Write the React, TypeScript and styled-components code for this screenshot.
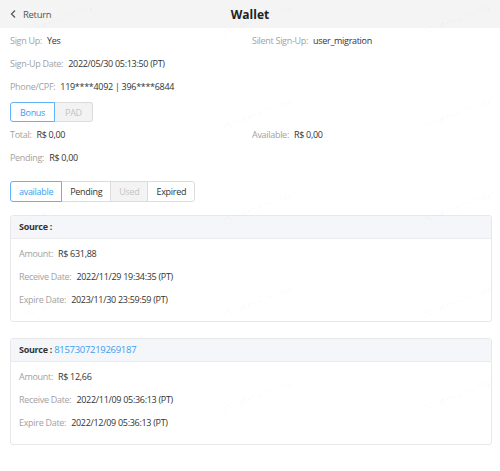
import { useState } from 'react';
import styled, { createGlobalStyle } from 'styled-components';

const GlobalStyle = createGlobalStyle`
  body {
    margin: 0;
    background: #fff;
    font-family: 'Open Sans', 'Noto Sans', sans-serif;
    font-size: 9px;
    letter-spacing: -0.3px;
    color: #333;
  }
  * { box-sizing: border-box; }
`;

interface Coupon {
  source?: string;
  amount: string;
  receiveDate: string;
  expireDate: string;
}

const coupons: Coupon[] = [
  {
    amount: 'R$ 631,88',
    receiveDate: '2022/11/29 19:34:35 (PT)',
    expireDate: '2023/11/30 23:59:59 (PT)',
  },
  {
    source: '8157307219269187',
    amount: 'R$ 12,66',
    receiveDate: '2022/11/09 05:36:13 (PT)',
    expireDate: '2022/12/09 05:36:13 (PT)',
  },
];

const tabs = [
  { name: 'available', disabled: false },
  { name: 'Pending', disabled: false },
  { name: 'Used', disabled: true },
  { name: 'Expired', disabled: false },
];

const WATERMARK = 'jhonatanm01611981';

function Field({ label, value }: { label: string; value: string }) {
  return (
    <Item>
      <Label>{label}:</Label>
      <Value>{value}</Value>
    </Item>
  );
}

export default function App() {
  const [kind, setKind] = useState('Bonus');
  const [tab, setTab] = useState('available');

  return (
    <Page>
      <GlobalStyle />
      <Header>
        <Back>
          <svg width="8" height="10" viewBox="0 0 8 10">
            <path d="M6 1.5 L2.5 5 L6 8.5" fill="none" stroke="#555" strokeWidth="1.2" />
          </svg>
          Return
        </Back>
        <Title>Wallet</Title>
      </Header>

      <Body>
        <Grid>
          <Field label="Sign Up" value="Yes" />
          <Field label="Silent Sign-Up" value="user_migration" />
        </Grid>
        <Field label="Sign-Up Date" value="2022/05/30 05:13:50 (PT)" />
        <Field label="Phone/CPF" value="119****4092 | 396****6844" />

        <Segment>
          {['Bonus', 'PAD'].map((k) => (
            <SegButton
              key={k}
              $active={kind === k}
              $disabled={k === 'PAD'}
              onClick={() => k !== 'PAD' && setKind(k)}
            >
              {k}
            </SegButton>
          ))}
        </Segment>

        <Grid>
          <Field label="Total" value="R$ 0,00" />
          <Field label="Available" value="R$ 0,00" />
        </Grid>
        <Field label="Pending" value="R$ 0,00" />

        <Tabs>
          {tabs.map((t) => (
            <TabButton
              key={t.name}
              $active={tab === t.name}
              $disabled={t.disabled}
              onClick={() => !t.disabled && setTab(t.name)}
            >
              {t.name}
            </TabButton>
          ))}
        </Tabs>

        {coupons.map((c, idx) => (
          <Card key={idx}>
            <CardHead>
              Source :{c.source && <SourceLink> {c.source}</SourceLink>}
            </CardHead>
            <CardBody>
              <Field label="Amount" value={c.amount} />
              <Field label="Receive Date" value={c.receiveDate} />
              <Field label="Expire Date" value={c.expireDate} />
            </CardBody>
          </Card>
        ))}
      </Body>

      <Watermark>
        {Array.from({ length: 15 }).map((_, i) => (
          <Mark key={i}>{WATERMARK}</Mark>
        ))}
      </Watermark>
    </Page>
  );
}

const Page = styled.div`
  position: relative;
  width: 500px;
  min-height: 471px;
  overflow: hidden;
`;

const Header = styled.div`
  position: relative;
  display: flex;
  align-items: center;
  justify-content: center;
  height: 28px;
  background-color: #f4f4f4;
`;

const Back = styled.div`
  position: absolute;
  left: 9px;
  top: 0;
  height: 28px;
  display: flex;
  align-items: center;
  gap: 6px;
  color: #555;
  font-size: 9.5px;
  cursor: pointer;
`;

const Title = styled.div`
  font-size: 12px;
  font-weight: 700;
  letter-spacing: 0;
  color: #222;
`;

const Body = styled.div`
  padding: 1px 8px 0 10px;
  display: flex;
  flex-direction: column;
  align-items: flex-start;
`;

const Grid = styled.div`
  display: grid;
  grid-template-columns: 242px 1fr;
  width: 100%;
`;

const Item = styled.div`
  height: 23px;
  line-height: 23px;
  white-space: nowrap;
`;

const Label = styled.span`
  color: #a2a2a2;
  margin-right: 5px;
`;

const Value = styled.span`
  color: #333;
`;

const Segment = styled.div`
  display: flex;
  margin: 4px 0 1px;
`;

const SegButton = styled.button<{ $active: boolean; $disabled?: boolean }>`
  height: 20px;
  padding: 0 9px;
  font: inherit;
  letter-spacing: inherit;
  border: 1px solid ${({ $active }) => ($active ? '#62b2f8' : '#dcdcdc')};
  background-color: ${({ $disabled }) => ($disabled ? '#f3f3f3' : '#fff')};
  color: ${({ $active, $disabled }) => ($active ? '#3b9cf2' : $disabled ? '#c4c4c4' : '#333')};
  cursor: pointer;

  &:first-child {
    border-radius: 3px 0 0 3px;
  }
  &:last-child {
    border-radius: 0 3px 3px 0;
    border-left: none;
    padding: 0 10px;
  }
`;

const Tabs = styled.div`
  display: flex;
  margin: 12px 0 13px;
`;

const TabButton = styled.button<{ $active: boolean; $disabled: boolean }>`
  position: relative;
  height: 21px;
  padding: 0 8px;
  margin-left: -1px;
  font: inherit;
  letter-spacing: inherit;
  border: 1px solid ${({ $active }) => ($active ? '#62b2f8' : '#dcdcdc')};
  background-color: ${({ $disabled }) => ($disabled ? '#f3f3f3' : '#fff')};
  color: ${({ $active, $disabled }) => ($active ? '#3b9cf2' : $disabled ? '#c4c4c4' : '#333')};
  z-index: ${({ $active }) => ($active ? 1 : 0)};
  cursor: pointer;

  &:first-child {
    margin-left: 0;
    border-radius: 3px 0 0 3px;
  }
  &:last-child {
    border-radius: 0 3px 3px 0;
  }
`;

const Card = styled.div`
  width: 100%;
  border: 1px solid #e8e8e8;
  border-radius: 3px;
  margin-bottom: 16px;
  overflow: hidden;
`;

const CardHead = styled.div`
  height: 23px;
  line-height: 22px;
  padding: 0 8px;
  background-color: #f5f6fa;
  border-bottom: 1px solid #ebebeb;
  font-weight: 700;
  color: #333;
`;

const SourceLink = styled.span`
  color: #3f9bf0;
  font-weight: 400;
  font-size: 9.5px;
`;

const CardBody = styled.div`
  padding: 3px 8px 10px;
`;

/* faint account tag repeated over the page */
const Watermark = styled.div`
  position: absolute;
  top: 0;
  left: 22px;
  display: grid;
  grid-template-columns: repeat(3, 199px);
  grid-auto-rows: 94px;
  align-items: start;
  justify-items: start;
  pointer-events: none;
`;

const Mark = styled.span`
  margin-top: 14px;
  font-size: 8px;
  line-height: 10px;
  letter-spacing: 0;
  color: rgba(0, 0, 0, 0.05);
  white-space: nowrap;
  transform: rotate(-20deg);
`;
